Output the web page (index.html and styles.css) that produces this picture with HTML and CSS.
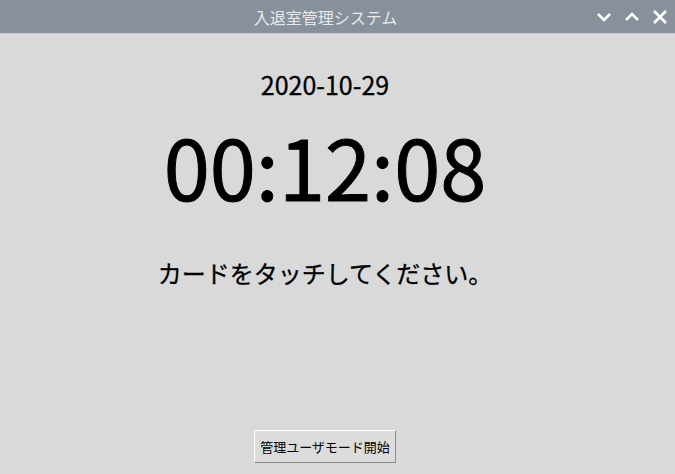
FILE: index.html
```html
<!DOCTYPE html>
<html lang="ja">
<head>
<meta charset="utf-8">
<link rel="stylesheet" href="styles.css">
</head>
<body>
<div class="window">
  <div class="titlebar">
    <div class="title">入退室管理システム</div>
    <div class="controls">
      <svg class="ctl" width="16" height="16" viewBox="0 0 16 16"><path d="M2 5 L8 11 L14 5" fill="none" stroke="#fff" stroke-width="2.6"/></svg>
      <svg class="ctl" width="16" height="16" viewBox="0 0 16 16"><path d="M2 11 L8 5 L14 11" fill="none" stroke="#fff" stroke-width="2.6"/></svg>
      <svg class="ctl" width="16" height="16" viewBox="0 0 16 16"><path d="M2 2 L14 14 M14 2 L2 14" fill="none" stroke="#fff" stroke-width="2.8"/></svg>
    </div>
  </div>
  <div class="content">
    <div class="date">2020-10-29</div>
    <div class="time">00:12:08</div>
    <div class="message">カードをタッチしてください。</div>
    <div class="spacer"></div>
    <button class="admin">管理ユーザモード開始</button>
  </div>
</div>
</body>
</html>
```
FILE: styles.css
```css
html, body {
  margin: 0;
  padding: 0;
  width: 675px;
  height: 474px;
  overflow: hidden;
  background: #d9d9d9;
  font-family: "Noto Sans CJK JP", "Noto Sans", sans-serif;
}
.window {
  display: flex;
  flex-direction: column;
  height: 474px;
}
.titlebar {
  height: 34px;
  background: #87909b;
  display: flex;
  align-items: center;
  justify-content: center;
  position: relative;
  border-bottom: 1px solid #c9ccd0;
  box-sizing: border-box;
}
.title {
  color: #e6e8ea;
  font-size: 16px;
  padding-right: 24px;
}
.controls {
  position: absolute;
  right: 7px;
  top: 9px;
  display: flex;
  gap: 12px;
}
.ctl { display: block; }
.content {
  flex: 1;
  display: flex;
  flex-direction: column;
  align-items: center;
  padding-right: 25px;
  color: #000;
}
.date {
  font-size: 25px;
  line-height: 1;
  margin-top: 38px;
  -webkit-text-stroke: 0.3px #000;
}
.time {
  font-size: 83px;
  line-height: 1;
  margin-top: 27px;
  -webkit-text-stroke: 1px #000;
}
.message {
  font-size: 24px;
  line-height: 1;
  margin-top: 54px;
  -webkit-text-stroke: 0.3px #000;
}
.spacer { flex: 1; }
.admin {
  font-family: "Noto Sans CJK JP", sans-serif;
  font-size: 13px;
  background: #dcdcdc;
  border: 1px solid;
  border-color: #ffffff #8a8a8a #8a8a8a #ffffff;
  padding: 6px 5px;
  margin-bottom: 11px;
  color: #000;
}
```
